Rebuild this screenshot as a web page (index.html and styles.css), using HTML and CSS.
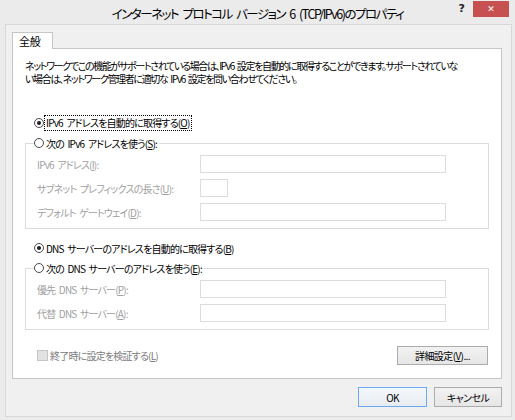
FILE: index.html
```html
<!DOCTYPE html>
<html lang="ja">
<head>
<meta charset="utf-8">
<title>インターネット プロトコル バージョン 6 (TCP/IPv6)のプロパティ</title>
<link rel="stylesheet" href="styles.css">
</head>
<body>
<div class="window">
  <div class="titlebar">
    <div></div>
    <div class="title">インターネット プロトコル バージョン 6 (TCP/IPv6)のプロパティ</div>
    <div class="controls"><span class="help">?</span><span class="close">✕</span></div>
  </div>
  <div class="client">
    <div class="tabs"><div class="tab">全般</div></div>
    <div class="panel">
      <p class="desc">ネットワークでこの機能がサポートされている場合は、IPv6 設定を自動的に取得することができます。サポートされていな<br>い場合は、ネットワーク管理者に適切な IPv6 設定を問い合わせてください。</p>

      <div class="radio-row first"><span class="radio checked"></span><span class="focus">IPv6 アドレスを自動的に取得する(<u>O</u>)</span></div>
      <fieldset class="group">
        <legend><span class="radio"></span><span class="lbl">次の IPv6 アドレスを使う(<u>S</u>):</span></legend>
        <div class="fields">
          <span class="flabel">IPv6 アドレス(<u>I</u>):</span><span class="input wide"></span>
          <span class="flabel">サブネット プレフィックスの長さ(<u>U</u>):</span><span class="input short"></span>
          <span class="flabel">デフォルト ゲートウェイ(<u>D</u>):</span><span class="input wide"></span>
        </div>
      </fieldset>

      <div class="radio-row second"><span class="radio checked"></span><span class="lbl">DNS サーバーのアドレスを自動的に取得する(<u>B</u>)</span></div>
      <fieldset class="group">
        <legend><span class="radio"></span><span class="lbl">次の DNS サーバーのアドレスを使う(<u>E</u>):</span></legend>
        <div class="fields">
          <span class="flabel">優先 DNS サーバー(<u>P</u>):</span><span class="input wide"></span>
          <span class="flabel">代替 DNS サーバー(<u>A</u>):</span><span class="input wide"></span>
        </div>
      </fieldset>

      <div class="footer-row">
        <span class="check"><span class="box"></span><span class="clbl">終了時に設定を検証する(<u>L</u>)</span></span>
        <button class="btn adv">詳細設定(<u>V</u>)...</button>
      </div>
    </div>
    <div class="buttons">
      <button class="btn default ok">OK</button>
      <button class="btn cancel">キャンセル</button>
    </div>
  </div>
</div>
</body>
</html>
```
FILE: styles.css
```css
* { box-sizing: border-box; }
html, body { margin: 0; padding: 0; }
body {
  width: 515px;
  height: 420px;
  background: #ebebeb;
  font-family: "Noto Sans CJK JP", "Noto Sans", sans-serif;
  font-feature-settings: "palt";
  font-size: 10px;
  letter-spacing: -0.8px;
  word-spacing: 2px;
  color: #000;
  overflow: hidden;
}
.window { width: 515px; height: 420px; }

.titlebar {
  height: 24px;
  display: grid;
  grid-template-columns: 1fr auto 1fr;
}
.title {
  font-size: 12.5px;
  letter-spacing: -1.5px;
  word-spacing: 3px;
  line-height: 20px;
  padding-top: 4px;
  white-space: nowrap;
  color: #000;
}
.controls {
  display: flex;
  justify-content: flex-end;
  align-items: flex-start;
  padding-right: 6px;
}
.help {
  font-family: "DejaVu Sans", sans-serif;
  font-weight: bold;
  font-size: 11px;
  letter-spacing: 0;
  line-height: 12px;
  margin-top: 3px;
  color: #222;
}
.close {
  width: 36px;
  height: 16px;
  margin-left: 8px;
  margin-top: 1px;
  background: #c75050;
  color: #fff;
  font-family: "DejaVu Sans", sans-serif;
  font-weight: bold;
  font-size: 9px;
  letter-spacing: 0;
  line-height: 16px;
  text-align: center;
}

.client {
  margin-left: 5px;
  width: 507px;
  height: 393px;
  border: 1px solid #d8d8d8;
  background: #f0f0f0;
  padding: 7px 0 0 6px;
}
.tabs { display: flex; }
.tab {
  width: 41px;
  height: 17px;
  border: 1px solid #c6c6c6;
  border-bottom: none;
  background: #fff;
  padding-left: 6px;
  font-size: 11px;
  letter-spacing: -0.3px;
  line-height: 16px;
  position: relative;
  z-index: 1;
  margin-bottom: -1px;
}
.panel {
  width: 490px;
  height: 331px;
  border: 1px solid #c6c6c6;
  background: #fff;
  padding: 0 12px;
}
.desc {
  margin: 0;
  padding-top: 10px;
  line-height: 13px;
  letter-spacing: -1.35px;
  white-space: nowrap;
}

.radio-row {
  display: flex;
  align-items: center;
  height: 16px;
  margin-left: 9px;
}
.radio-row.first { margin-top: 30px; }
.radio-row.second { margin-top: 11px; }
.radio {
  width: 10px;
  height: 10px;
  border: 1px solid #4a4a4a;
  border-radius: 50%;
  background: #fff;
  flex: none;
  position: relative;
  margin-right: 2px;
}
.radio.checked::after {
  content: "";
  position: absolute;
  left: 2px; top: 2px;
  width: 4px; height: 4px;
  border-radius: 50%;
  background: #1e1e1e;
}
.focus {
  outline: 1px dotted #000;
  padding: 0 1px;
  margin-left: -1px;
  line-height: 14px;
}

.group {
  margin: 4px 0 0;
  padding: 4px 0 7px 8px;
  border: 1px solid #dcdcdc;
  min-width: 0;
}
.group legend {
  padding: 0 2px 0 0;
  display: flex;
  align-items: center;
  height: 16px;
}
.fields {
  display: grid;
  grid-template-columns: 163px 246px;
  row-gap: 6px;
  margin-left: 3px;
  align-items: center;
}
.flabel { color: #a0a0a0; white-space: nowrap; }
.input {
  display: block;
  height: 18px;
  border: 1px solid #dcdcdc;
  background: #fff;
}
.input.short { width: 28px; }

.footer-row {
  margin-top: 16px;
  display: flex;
  justify-content: space-between;
  align-items: center;
  padding-right: 1px;
}
.check {
  display: flex;
  align-items: center;
  margin-left: 12px;
  color: #7a7a7a;
}
.box {
  width: 11px;
  height: 11px;
  border: 1px solid #c4c4c4;
  background: #e2e2e2;
  margin-right: 2px;
}

.btn {
  font-family: inherit;
  font-feature-settings: "palt";
  font-size: 10px;
  letter-spacing: -0.6px;
  color: #000;
  border: 1px solid #acacac;
  background: linear-gradient(#f2f2f2, #e6e6e6);
  padding: 0;
  margin: 0;
  height: 19px;
  line-height: 17px;
}
.adv { width: 91px; }
.buttons {
  width: 490px;
  margin-top: 8px;
  display: flex;
  justify-content: flex-end;
  gap: 7px;
}
.buttons .btn { height: 20px; }
.ok { width: 69px; }
.cancel { width: 68px; }
.default { border-color: #6aaaf0; background: linear-gradient(#f4f7fb, #e8ecf1); }
```
